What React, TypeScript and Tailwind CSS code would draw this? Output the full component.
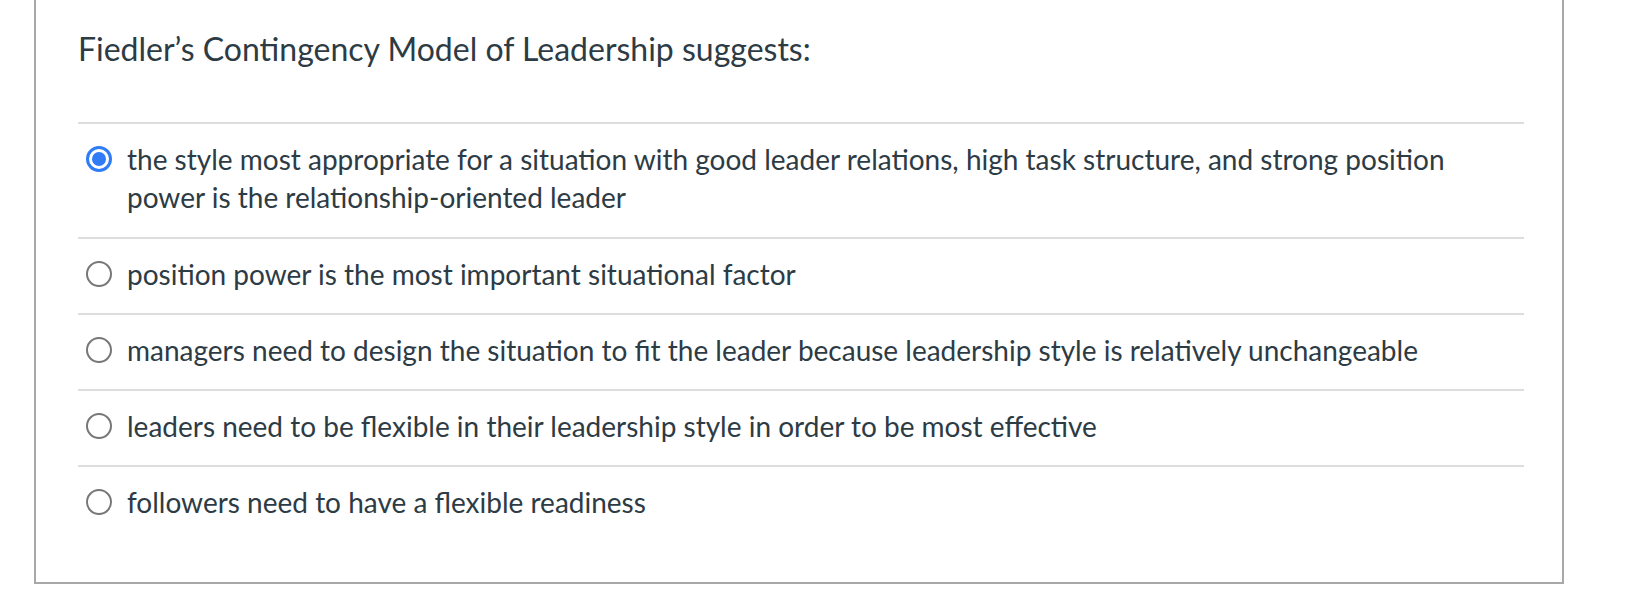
import React from 'react';

const answers = [
  'the style most appropriate for a situation with good leader relations, high task structure, and strong position power is the relationship-oriented leader',
  'position power is the most important situational factor',
  'managers need to design the situation to fit the leader because leadership style is relatively unchangeable',
  'leaders need to be flexible in their leadership style in order to be most effective',
  'followers need to have a flexible readiness',
];

const Radio = ({ checked }: { checked: boolean }) =>
  checked ? (
    <span className="mt-[6px] flex h-[26px] w-[26px] shrink-0 items-center justify-center rounded-full border-[3px] border-[#2f7cf6] bg-white">
      <span className="h-[14px] w-[14px] rounded-full bg-[#2f7cf6]" />
    </span>
  ) : (
    <span className="mt-[6px] h-[26px] w-[26px] shrink-0 rounded-full border-2 border-[#777777] bg-white" />
  );

export default function App() {
  return (
    <div className="min-h-[610px] bg-white pl-[34px] pr-[66px]" style={{ fontFamily: 'Lato, "Open Sans", sans-serif' }}>
      <div className="border-x-2 border-b-2 border-[#a8a8a8] pl-[42px] pr-[38px] pb-[41px] pt-[29px] text-[#2d3b45]">
        <h1 className="text-[32px] leading-[40px] font-normal">Fiedler’s Contingency Model of Leadership suggests:</h1>
        <div className="mt-[53px] border-t-2 border-[#dddddd]">
          {answers.map((a, i) => (
            <div key={i} className="flex items-start gap-[15px] border-b-2 border-[#dddddd] pt-[16px] pb-[20px] pl-[8px] first:pb-[21px] last:border-b-0">
              <Radio checked={i === 0} />
              <span className="text-[28px] leading-[38px]">{a}</span>
            </div>
          ))}
        </div>
      </div>
    </div>
  );
}
